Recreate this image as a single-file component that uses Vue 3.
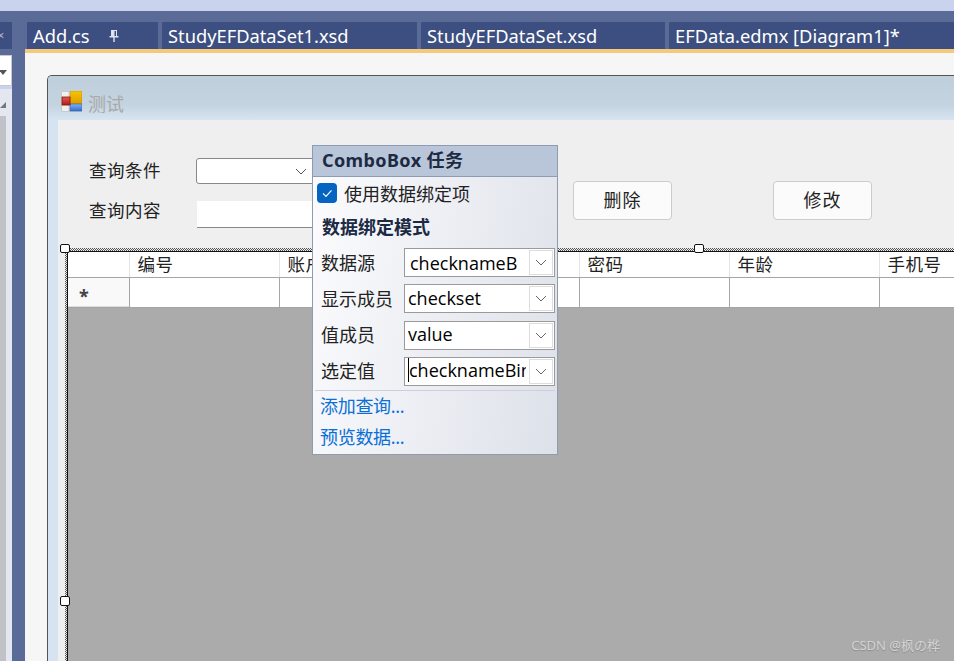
<script setup>
const tabs = [
  { name: 'Add.cs', width: 131, pin: true },
  { name: 'StudyEFDataSet1.xsd', width: 255 },
  { name: 'StudyEFDataSet.xsd', width: 244 },
  { name: 'EFData.edmx [Diagram1]*', width: 300 },
]
const columns = ['编号', '账户', '', '密码', '年龄', '手机号']
const bindings = [
  { label: '数据源', value: 'checknameB', cls: 'first' },
  { label: '显示成员', value: 'checkset', cls: '' },
  { label: '值成员', value: 'value', cls: '' },
  { label: '选定值', value: 'checknameBinding', cls: 'active' },
]
</script>

<template>
  <div class="app">
    <div class="stripe"></div>
    <div class="ide">
      <aside class="side">
        <div class="side-tab"><span>×</span></div>
        <div class="side-combo"><i class="down"></i></div>
        <div class="side-gap"></div>
        <div class="side-list">
          <i class="up"></i>
          <div class="side-track"></div>
        </div>
      </aside>
      <main class="editor">
        <div class="tabs">
          <div v-for="t in tabs" :key="t.name" class="tab" :style="{ width: t.width + 'px' }">
            <span>{{ t.name }}</span>
            <svg v-if="t.pin" class="pin" viewBox="0 0 12 13" width="12" height="13">
              <path d="M3 1h6v6H3zM1.500 7h9v1.500h-9zM5.300 8.500h1.400V13H5.300z" fill="#dfe4f0" />
              <path d="M6.500 2h1.500v5H6.500z" fill="#3d4f80" />
            </svg>
          </div>
        </div>
        <div class="accent"></div>
        <div class="surface">
          <section class="form">
            <header class="form-title">
              <svg class="form-icon" viewBox="0 0 21 21" width="21" height="21">
                <defs>
                  <linearGradient id="gy" x1="0" y1="0" x2="0" y2="1"><stop offset="0" stop-color="#f7c600" /><stop offset="1" stop-color="#e09a00" /></linearGradient>
                  <linearGradient id="gb" x1="0" y1="0" x2="0" y2="1"><stop offset="0" stop-color="#7fb0f0" /><stop offset="1" stop-color="#2f6fd0" /></linearGradient>
                  <linearGradient id="gr" x1="0" y1="0" x2="0" y2="1"><stop offset="0" stop-color="#e8584f" /><stop offset="1" stop-color="#b01c18" /></linearGradient>
                </defs>
                <path d="M.5 .5h20v20H.5zM.5 7h8M.5 14h8M8 .5v20" fill="#f0f0f0" stroke="#c9c9c9" />
                <rect x="9" y="0" width="12" height="13" fill="url(#gy)" stroke="#b98a10" stroke-width=".6" />
                <rect x="9" y="13" width="12" height="7" fill="url(#gb)" stroke="#2f62ad" stroke-width=".6" />
                <rect x="1" y="6" width="8" height="8" fill="url(#gr)" stroke="#7e1a16" stroke-width=".8" />
              </svg>
              <span>测试</span>
            </header>
            <div class="form-body">
              <div class="controls">
                <div class="query">
                  <div class="query-row row-one">
                    <label>查询条件</label>
                    <div class="form-combo">
                      <svg viewBox="0 0 12 7" width="12" height="7"><path d="M1 1l5 5 5-5" fill="none" stroke="#555" /></svg>
                    </div>
                  </div>
                  <div class="query-row row-two">
                    <label>查询内容</label>
                    <div class="form-input"></div>
                  </div>
                </div>
                <div class="actions">
                  <button>删除</button>
                  <button>修改</button>
                </div>
              </div>
              <div class="selection">
                <div class="grid-view">
                  <div class="grid-row head">
                    <div class="corner"></div>
                    <div v-for="(c, i) in columns" :key="i" class="cell">{{ c }}</div>
                  </div>
                  <div class="grid-row data">
                    <div class="corner star">*</div>
                    <div v-for="(c, i) in columns" :key="i" class="cell"></div>
                  </div>
                </div>
                <i class="handle h-tl"></i>
                <i class="handle h-tm"></i>
                <i class="handle h-ml"></i>
              </div>
            </div>
          </section>
        </div>
      </main>
    </div>

    <div class="tasks">
      <div class="tasks-head">ComboBox 任务</div>
      <div class="tasks-body">
        <div class="check-row">
          <span class="check">
            <svg viewBox="0 0 20 20" width="20" height="20"><path d="M6 10.300l3 3 5.500-6" fill="none" stroke="#fff" stroke-width="1.200" /></svg>
          </span>
          <span>使用数据绑定项</span>
        </div>
        <div class="section">数据绑定模式</div>
        <div class="bind-list">
          <div v-for="b in bindings" :key="b.label" class="bind-row">
            <span class="bind-label">{{ b.label }}</span>
            <div class="bind-box" :class="b.cls">
              <span class="bind-value">{{ b.value }}</span>
              <span class="bind-btn">
                <svg viewBox="0 0 12 7" width="12" height="7"><path d="M1 1l5 5 5-5" fill="none" stroke="#666" /></svg>
              </span>
            </div>
          </div>
        </div>
        <div class="rule"></div>
        <a class="link first-link">添加查询...</a>
        <a class="link">预览数据...</a>
      </div>
    </div>

    <div class="mark">CSDN @枫の桦</div>
  </div>
</template>

<style scoped>
.app {
  position: relative;
  width: 954px;
  height: 661px;
  overflow: hidden;
  background: #5b6b97;
  font-family: "Noto Sans", "Noto Sans CJK SC", sans-serif;
}
.stripe {
  height: 11px;
  background: #c9d3ee;
}
.ide {
  display: flex;
  height: 650px;
  padding-top: 11px;
  box-sizing: border-box;
}
.side {
  width: 12px;
  margin-right: 13px;
  display: flex;
  flex-direction: column;
  flex: none;
}
.side-tab {
  height: 27px;
  background: #3d4f80;
  color: #aab4d0;
  font-size: 13px;
  line-height: 27px;
  overflow: hidden;
  margin-bottom: 6px;
}
.side-tab span {
  margin-left: -3px;
  display: block;
}
.side-combo {
  height: 31px;
  box-sizing: border-box;
  background: #fff;
  border: 1px solid #c8cad2;
  border-left: 0;
  position: relative;
}
.down {
  position: absolute;
  left: -1px;
  top: 14px;
  border-left: 4px solid transparent;
  border-right: 4px solid transparent;
  border-top: 5px solid #555;
}
.side-gap {
  height: 3px;
  background: #c9d3ee;
}
.side-list {
  flex: 1;
  background: #e4e6f0;
  position: relative;
  padding-top: 27px;
}
.up {
  position: absolute;
  left: 0;
  top: 13px;
  border-left: 6px solid transparent;
  border-bottom: 6px solid #777;
}
.side-track {
  width: 6px;
  height: 100%;
  background: #c0c2c8;
}
.editor {
  flex: 1;
  min-width: 0;
  display: flex;
  flex-direction: column;
}
.tabs {
  display: flex;
  gap: 4px;
  height: 27px;
  padding-left: 2px;
  flex: none;
}
.tab {
  flex: none;
  background: #3d4f80;
  color: #fff;
  font-size: 18.300px;
  line-height: 26px;
  padding-left: 6px;
  box-sizing: border-box;
  display: flex;
  align-items: center;
  white-space: nowrap;
}
.pin {
  margin-left: 18px;
}
.accent {
  height: 4px;
  flex: none;
  margin-top: 0;
  background: #f5c97a;
}
.surface {
  flex: 1;
  background: #f6f6f6;
  padding: 22px 0 0 22px;
  min-height: 0;
}
.form {
  height: 100%;
  box-sizing: border-box;
  border-left: 1px solid #555;
  border-top: 1px solid #555;
  border-top-left-radius: 5px;
  display: flex;
  flex-direction: column;
  background: #d6e4f2;
}
.form-title {
  height: 44px;
  flex: none;
  box-sizing: border-box;
  padding: 15px 0 0 13px;
  display: flex;
  gap: 6px;
  align-items: flex-start;
  color: #a8a8a8;
  font-size: 18px;
  line-height: 26px;
  background: linear-gradient(#bfcfdc 0, #c4d3e0 65%, #d7e5f3 100%);
  border-top-left-radius: 4px;
}
.form-body {
  flex: 1;
  margin-left: 10px;
  background: #efefef;
  min-height: 0;
  display: flex;
  flex-direction: column;
}
.controls {
  height: 128px;
  flex: none;
  box-sizing: border-box;
  padding: 38px 0 0 31px;
  display: flex;
}
.query {
  display: flex;
  flex-direction: column;
  gap: 17px;
}
.query-row {
  display: flex;
  align-items: center;
  height: 26px;
}
.query-row label {
  width: 107px;
  flex: none;
  color: #222;
  font-size: 17.500px;
  letter-spacing: .5px;
}
.row-one label {
  margin-bottom: 4px;
}
.row-two label {
  margin-bottom: 10px;
}
.form-combo {
  width: 124px;
  height: 26px;
  box-sizing: border-box;
  background: #fff;
  border: 1px solid #888;
  border-radius: 3px;
  display: flex;
  align-items: center;
  justify-content: flex-end;
  padding-right: 12px;
}
.form-input {
  width: 124px;
  height: 27px;
  box-sizing: border-box;
  margin-left: 1px;
  margin-top: 1px;
  background: #fff;
  border-bottom: 1px solid #888;
}
.actions {
  display: flex;
  gap: 101px;
  margin-left: 252px;
  margin-top: 23px;
}
.actions button {
  width: 99px;
  height: 39px;
  box-sizing: border-box;
  background: #fbfbfb;
  border: 1px solid #ccc;
  border-radius: 4px;
  color: #222;
  font-family: inherit;
  font-size: 18px;
  letter-spacing: 1px;
  padding: 0 0 4px;
}
.selection {
  position: relative;
  flex: 1;
  min-height: 0;
  margin-left: 7px;
  padding: 3px 0 0 2px;
  background: conic-gradient(#555 25%, #efefef 0 50%, #555 0 75%, #efefef 0) 0 0 / 2px 2px;
}
.grid-view {
  height: 100%;
  box-sizing: border-box;
  border-left: 1px solid #111;
  border-top: 1px solid #111;
  background: #ababab;
}
.grid-row {
  display: grid;
  grid-template-columns: 61px repeat(6, 150px);
  box-sizing: border-box;
  background: #fff;
  border-bottom: 1px solid #a5a5a5;
}
.head {
  height: 26px;
}
.data {
  height: 30px;
}
.corner {
  position: relative;
  background: #fff;
}
.star {
  height: 29px;
  overflow: hidden;
  color: #444;
  font-size: 18px;
  font-weight: 700;
  padding: 7px 0 0 11px;
  line-height: 22px;
  box-sizing: border-box;
  border-bottom: 1px solid #ddd;
  background: #f9f9f9;
}
.cell {
  box-sizing: border-box;
  padding-left: 7.500px;
  font-size: 17.500px;
  line-height: 24px;
  letter-spacing: .5px;
  color: #222;
  white-space: nowrap;
  overflow: hidden;
}
.head .cell {
  border-left: 1px solid #e4e4e4;
}
.data .cell {
  border-left: 1px solid #a5a5a5;
}
.handle {
  position: absolute;
  width: 8px;
  height: 7px;
  border: 1px solid #111;
  border-radius: 2px;
  background: #fff;
}
.h-tl {
  left: -5px;
  top: -4px;
}
.h-tm {
  left: 629px;
  top: -4px;
}
.h-ml {
  left: -5px;
  top: 348px;
  height: 8px;
}
.tasks {
  position: absolute;
  left: 312px;
  top: 145px;
  width: 246px;
  height: 310px;
  box-sizing: border-box;
  border: 1px solid #8f9bb0;
  background: linear-gradient(100deg, #fcfcfe 0, #dde1e9 100%);
  color: #222;
  font-family: "Noto Sans", "Noto Sans CJK SC", sans-serif;
}
.tasks-head {
  height: 31px;
  box-sizing: border-box;
  padding-left: 9px;
  background: #b9c6d9;
  border-bottom: 1px solid #8f9bb0;
  color: #1c2a44;
  font-size: 18px;
  font-weight: 700;
  line-height: 28px;
  letter-spacing: .4px;
}
.tasks-body {
  display: flex;
  flex-direction: column;
}
.check-row {
  display: flex;
  align-items: center;
  gap: 7px;
  padding: 6px 0 0 4px;
  height: 20px;
  font-size: 18px;
  color: #222;
}
.check {
  display: block;
  width: 20px;
  height: 20px;
  border-radius: 4px;
  background: #0563c1;
}
.section {
  margin-top: 9px;
  padding-left: 9px;
  height: 30px;
  line-height: 30px;
  font-size: 18px;
  font-weight: 700;
  color: #1c2a44;
}
.bind-list {
  margin-top: 6px;
  display: flex;
  flex-direction: column;
  gap: 7.330px;
}
.bind-row {
  display: flex;
  align-items: center;
  height: 29px;
  padding-left: 8px;
}
.bind-label {
  width: 83px;
  flex: none;
  font-size: 18px;
  white-space: nowrap;
  margin-bottom: 2px;
}
.bind-box {
  width: 151px;
  height: 29px;
  box-sizing: border-box;
  border: 1px solid #9a9a9a;
  background: #fff;
  display: flex;
  align-items: center;
  padding-left: 3px;
}
.bind-box.first {
  padding-left: 5px;
}
.bind-value {
  flex: 1;
  min-width: 0;
  overflow: hidden;
  white-space: nowrap;
  color: #000;
  font-size: 18px;
  font-family: "Open Sans", "Noto Sans", sans-serif;
  margin-bottom: 2px;
}
.first .bind-value {
  margin-bottom: 0;
}
.active .bind-value {
  border-left: 1px solid #000;
  line-height: 24px;
  padding-left: 0;
}
.bind-btn {
  flex: none;
  width: 24px;
  height: 25px;
  margin: 0 1px 0 3px;
  box-sizing: border-box;
  border: 1px solid #ddd;
  background: #fff;
  display: flex;
  align-items: center;
  justify-content: center;
}
.rule {
  height: 1px;
  margin: 4px 2px 0;
  background: #cfcfdc;
}
.link {
  padding-left: 7px;
  height: 31px;
  line-height: 31px;
  font-size: 18px;
  letter-spacing: -.3px;
  color: #0a6fd6;
}
.first-link {
  margin-top: 0;
}
.mark {
  position: absolute;
  right: 14px;
  bottom: 7px;
  font-size: 13px;
  color: #d4d4d4;
  text-shadow: 0 1px 1px #8a8a8a;
}
</style>
